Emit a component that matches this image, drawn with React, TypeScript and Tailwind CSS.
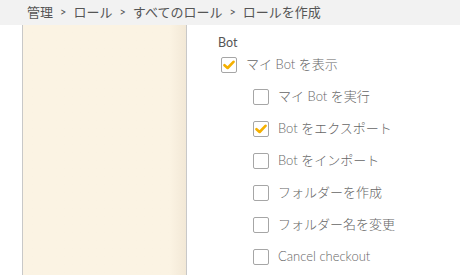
import React from 'react';

type Perm = { label: string; checked: boolean; sub?: boolean };

const perms: Perm[] = [
  { label: 'マイ Bot を表示', checked: true },
  { label: 'マイ Bot を実行', checked: false, sub: true },
  { label: 'Bot をエクスポート', checked: true, sub: true },
  { label: 'Bot をインポート', checked: false, sub: true },
  { label: 'フォルダーを作成', checked: false, sub: true },
  { label: 'フォルダー名を変更', checked: false, sub: true },
  { label: 'Cancel checkout', checked: false, sub: true },
];

function CheckBox({ checked }: { checked: boolean }) {
  return (
    <span className="w-4 h-4 shrink-0 rounded-[2px] border border-[#a6a6a6] bg-white flex items-center justify-center">
      {checked && (
        <svg width="12" height="10" viewBox="0 0 12 10">
          <path d="M1.5 5.2 L4.6 8 L10.5 1.8" fill="none" stroke="#f5b000" strokeWidth="2.6" strokeLinecap="round" strokeLinejoin="round" />
        </svg>
      )}
    </span>
  );
}

export default function App() {
  const crumbs = ['管理', 'ロール', 'すべてのロール', 'ロールを作成'];
  return (
    <div className="w-[460px] h-[275px] overflow-hidden flex flex-col bg-white text-[#555] font-['Lato','Noto_Sans_CJK_JP',sans-serif]">
      <header className="h-[25px] shrink-0 bg-[#f2f2f2] flex items-center pl-[27px] text-[13px] text-[#555]">
        {crumbs.map((c, i) => (
          <React.Fragment key={c}>
            {i > 0 && <span className="mx-[7px] text-[11px]">&gt;</span>}
            <span>{c}</span>
          </React.Fragment>
        ))}
      </header>

      <div className="flex-1 flex min-h-0">
        <aside className="ml-[22px] w-[165px] shrink-0 border-x border-[#c8c8c8] bg-gradient-to-r from-[#fbf3e3] from-90% to-[#f2e8d6]" />

        <main className="flex-1 pl-[31px] pt-[12px]">
          <div className="text-[12.5px] text-[#555] h-[12px] leading-[12px]">Bot</div>
          <ul className="flex flex-col">
            {perms.map((p) => (
              <li
                key={p.label}
                className={`h-[32px] flex items-center gap-[9px] text-[13px] font-light text-[#666] ${p.sub ? 'pl-[35px]' : 'pl-[3px]'}`}
              >
                <CheckBox checked={p.checked} />
                <span>{p.label}</span>
              </li>
            ))}
          </ul>
        </main>
      </div>
    </div>
  );
}
